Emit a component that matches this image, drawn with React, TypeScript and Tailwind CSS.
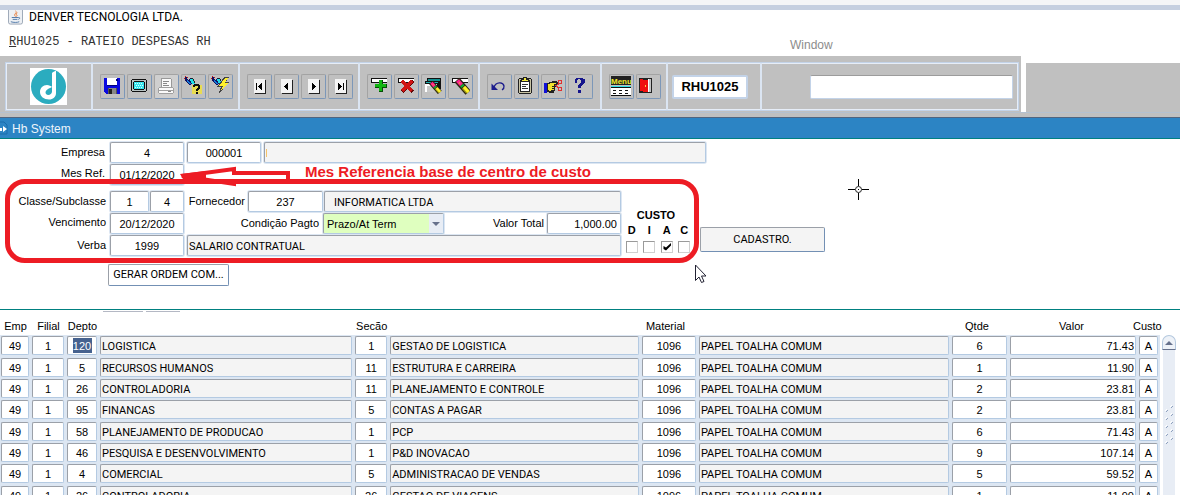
import React from "react";

type Kids = { children?: React.ReactNode };

const field =
  "h-[21px] min-w-0 rounded-[2px] border border-t-[#9ba0a8] border-l-[#9ba0a8] border-r-[#b4cae2] border-b-[#b4cae2] px-[3px] pt-px text-[11px] leading-4 text-black outline-none shadow-[0_0_0_1px_#dce6f2]";

const caps = "font-['Roboto',sans-serif]";

function Icon({ children }: Kids) {
  return (
    <svg viewBox="0 0 20 20" className="h-5 w-5" shapeRendering="crispEdges" aria-hidden="true">
      {children}
    </svg>
  );
}

function Nav({ d }: { d: string }) {
  return (
    <Icon>
      <path d="M6 4h11v14H6z" fill="#222" />
      <path d="M5 3h11v14H5z" fill="#f4f4f4" />
      <path d={d} fill="#000" transform="translate(1 1)" />
    </Icon>
  );
}

function Pencil() {
  return (
    <g shapeRendering="auto">
      <path d="M5 3l11 12.500" stroke="#2a2410" strokeWidth="6.500" />
      <path d="M5.500 3.500l4 4.500" stroke="#ff2090" strokeWidth="4" />
      <path d="M7 5.500l1 1" stroke="#ff9a30" strokeWidth="1.500" />
      <path d="M9.500 8l1.500 1.700" stroke="#18a830" strokeWidth="4" />
      <path d="M11.500 10.200l4.500 5" stroke="#a09a18" strokeWidth="4.500" />
      <path d="M12 10l4.500 5" stroke="#fff32a" strokeWidth="3" />
    </g>
  );
}

function Flashlight() {
  return (
    <>
      <path d="M2 1h2v2h1v1h1V3h1V2h1v1h1v5h-1v1H6V8H5V7H4V6H3V5H2z" fill="#101060" />
      <path d="M1 2h1v1H1zM2 0h1v1H2zM4 1h1v1H4z" fill="#d01010" />
      <path d="M4 4h1v1h1v1h1v1h1v1H6V7H5V6H4z" fill="#1478d8" />
      <path d="M7 3h3v2h1v2h1v1H9V7H8V5H7z" fill="#20e0e8" />
      <path d="M8 2h2v1h1v2h1v2h-1V5h-1V3H8z" fill="#222" />
    </>
  );
}

const groups: { label: string; icon: React.ReactNode; off?: boolean }[][] = [
  [
    {
      label: "Salvar",
      icon: (
        <Icon>
          <path d="M2 2h16v16H4v-1H3v-1H2z" fill="#0a0ae0" />
          <path d="M5 2h10v7H5z" fill="#fff" />
          <path d="M14 3h2v2h-2zM5 9h10v1H5z" fill="#000080" />
          <path d="M6 12h9v6H6z" fill="#555" />
          <path d="M7 12h7v6H7z" fill="#888" />
          <path d="M7 13h3v5H7z" fill="#222" />
        </Icon>
      ),
    },
    {
      label: "Tela",
      icon: (
        <Icon>
          <path d="M3 3h14v1h1v11h-1v1H3v-1H2V4h1z" fill="#111" />
          <path d="M3 4h14v11H3z" fill="#b9c3c3" />
          <path d="M5 5h10v1h1v7h-1v1H5v-1H4V6h1z" fill="#111" />
          <path d="M5 6h10v7H5z" fill="#38e6ee" />
          <path d="M6 7h1v1H6zM8 7h1v1H8zM10 7h1v1h-1zM12 7h1v1h-1zM7 9h1v1H7zM9 9h1v1H9zM11 9h1v1h-1zM13 9h1v1h-1zM6 11h1v1H6zM8 11h1v1H8zM10 11h1v1h-1zM12 11h1v1h-1z" fill="#d0ffff" />
        </Icon>
      ),
    },
    {
      label: "Imprimir",
      off: true,
      icon: (
        <Icon>
          <path d="M5 2h10v10H5z" fill="#fafafa" />
          <path d="M5 2h10v1H5zM5 3h1v8H5zM15 3h1v8h-1z" fill="#999" />
          <path d="M7 5h6v1H7zM7 7h4v1H7zM7 9h6v1H7z" fill="#888" />
          <path d="M3 11h14v1h1v5h-1v1H3v-1H2v-5h1z" fill="#a0a0a0" />
          <path d="M3 12h14v2H3zM3 15h14v2H3z" fill="#fafafa" />
          <path d="M12 15h3v1h-3z" fill="#888" />
        </Icon>
      ),
    },
    {
      label: "Consultar",
      icon: (
        <Icon>
          <Flashlight />
          <path d="M9 9h10v9H9z" fill="#e8dc50" />
          <path d="M11 8h5v1h1v4h-1v1h-1v1h-2v-2h1v-1h1v-2h-3v1h-2V9h1zM13 16h2v2h-2z" fill="#111" />
        </Icon>
      ),
    },
    {
      label: "Executar consulta",
      icon: (
        <Icon>
          <Flashlight />
          <path d="M14 1h5l-3 5h3L8 19l3-8H7z" fill="#444" />
          <path d="M15 2h3l-3 5h3l-8 9 3-6H9z" fill="#fff02a" />
        </Icon>
      ),
    },
  ],
  [
    { label: "Primeiro", icon: <Nav d="M6 6h1v7H6zM12 6v7h-1v-1h-1v-1H9v-1H8V9h1V8h1V7h1V6z" /> },
    { label: "Anterior", icon: <Nav d="M11 6v7h-1v-1H9v-1H8v-1H7V9h1V8h1V7h1V6z" /> },
    { label: "Próximo", icon: <Nav d="M8 6v7h1v-1h1v-1h1v-1h1V9h-1V8h-1V7H9V6z" /> },
    { label: "Último", icon: <Nav d="M13 6h-1v7h1zM7 6v7h1v-1h1v-1h1v-1h1V9h-1V8H9V7H8V6z" /> },
  ],
  [
    {
      label: "Inserir",
      icon: (
        <Icon>
          <path d="M2 2h16v5H2z" fill="#111" />
          <path d="M3 3h15v3H3z" fill="#fff" />
          <path d="M10 4h4v4h4v4h-4v4h-4v-4H6V8h4z" fill="#064d06" />
          <path d="M10 4h3v4h4v3h-4v4h-3v-4H6V8h4z" fill="#12b612" />
        </Icon>
      ),
    },
    {
      label: "Excluir",
      icon: (
        <Icon>
          <path d="M2 2h16v5H2z" fill="#111" />
          <path d="M3 3h15v3H3z" fill="#fff" />
          <path d="M6 5l11 11M17 5L6 16" stroke="#600808" strokeWidth="4" />
          <path d="M6 5l10 10M16 5L6 15" stroke="#d01414" strokeWidth="3" />
        </Icon>
      ),
    },
    {
      label: "Limpar tela",
      icon: (
        <Icon>
          <path d="M4 2h14v11H4z" fill="#111" />
          <path d="M5 3h12v2H5z" fill="#109090" />
          <path d="M2 5h14v11H2z" fill="#111" />
          <path d="M3 6h12v1H3z" fill="#20b0b0" />
          <path d="M2 8h12v8H2z" fill="#fff" />
          <path d="M4 10h9v6H4z" fill="#c8c8c8" />
          <g transform="translate(4 4) scale(.8)"><Pencil /></g>
        </Icon>
      ),
    },
    {
      label: "Limpar registro",
      icon: (
        <Icon>
          <path d="M2 2h16v5H2z" fill="#111" />
          <path d="M3 3h15v3H3z" fill="#fff" />
          <g transform="translate(2 1)"><Pencil /></g>
        </Icon>
      ),
    },
  ],
  [
    {
      label: "Desfazer",
      icon: (
        <svg viewBox="0 0 20 20" className="h-5 w-5" aria-hidden="true">
          <path d="M5 11c2-5 9-5.500 10-1 .3 2-.5 3-2 4" fill="none" stroke="#1c1c8c" strokeWidth="1.300" />
          <path d="M2.500 7.500v6.500H9z" fill="#1c1c8c" />
        </svg>
      ),
    },
    {
      label: "Colar",
      icon: (
        <Icon>
          <path d="M3 2h12v1h1v14h-1v1H3v-1H2V3h1z" fill="#222" />
          <path d="M3 3h12v14H3z" fill="#c9c4a4" />
          <path d="M4 4h10v12H4z" fill="#222" />
          <path d="M5 5h8v10H5z" fill="#fff" />
          <path d="M7 1h4v2h2v3H5V3h2z" fill="#222" />
          <path d="M8 2h2v2h2v1H6V4h2z" fill="#f4ea3c" />
          <path d="M6 8h6v1H6zM6 10h4v1H6zM6 12h6v1H6z" fill="#333" />
        </Icon>
      ),
    },
    {
      label: "Recortar",
      icon: (
        <Icon>
          <path d="M1 7h3v10H1z" fill="#1010d8" />
          <path d="M4 7h2V6h3V5h5v1h1v3h-3v6h-1v2H6v-1H4z" fill="#222" />
          <path d="M5 8h2V7h6v1h-2v6h-1v1H6v-1H5z" fill="#f0e030" />
          <path d="M9 10h4M9 12h3M8 14h3" stroke="#222" />
          <path d="M12 10l4-2M12 9l4 3" stroke="#e03030" />
          <path d="M15.500 4.500h3v3h-3zM15.500 11.500h3v3h-3z" fill="none" stroke="#e03030" />
        </Icon>
      ),
    },
    {
      label: "Ajuda",
      icon: (
        <Icon>
          <path d="M6 2h7v1h2v4h-1v1h-1v1h-1v1h-1v2H8v-3h1V8h1V7h1V4h-1V3H8v1H7v3H5V3h1zM8 14h3v3H8z" fill="#15158c" />
        </Icon>
      ),
    },
  ],
  [
    {
      label: "Menu",
      icon: (
        <Icon>
          <path d="M0 0h20v9H0z" fill="#222" />
          <text x="0" y="8" fontSize="8" fontWeight="700" fontFamily="Liberation Sans, sans-serif" fill="#f0ea2c">Menu</text>
          <path d="M0 10h20v1H0z" fill="#30e0e8" />
          <path d="M0 11h20v1H0z" fill="#111" />
          <path d="M0 12h20v8H0z" fill="#fff" />
          <path d="M2 14.500h4M8 14.500h4M14 14.500h4M2 17.500h4M8 17.500h4M14 17.500h4" stroke="#111" strokeDasharray="3 1" />
          <path d="M0 19h20v1H0z" fill="#111" />
        </Icon>
      ),
    },
    {
      label: "Sair",
      icon: (
        <Icon>
          <path d="M1 2h13v15H1z" fill="#222" />
          <path d="M2 3h3v1h5v12H5v-1H2z" fill="#f01010" />
          <path d="M7 9h1v2H7z" fill="#ffd040" />
          <path d="M10 3h1v13h-1z" fill="#fff" />
          <path d="M11 3h2v13h-2z" fill="#c4c4c4" />
        </Icon>
      ),
    },
  ],
];

const rows = [
  ["120", "LOGISTICA", "1", "GESTAO DE LOGISTICA", "6", "71.43"],
  ["5", "RECURSOS HUMANOS", "11", "ESTRUTURA E CARREIRA", "1", "11.90"],
  ["26", "CONTROLADORIA", "11", "PLANEJAMENTO E CONTROLE", "2", "23.81"],
  ["95", "FINANCAS", "5", "CONTAS A PAGAR", "2", "23.81"],
  ["58", "PLANEJAMENTO DE PRODUCAO", "1", "PCP", "6", "71.43"],
  ["46", "PESQUISA E DESENVOLVIMENTO", "1", "P&D INOVACAO", "9", "107.14"],
  ["4", "COMERCIAL", "5", "ADMINISTRACAO DE VENDAS", "5", "59.52"],
  ["26", "CONTROLADORIA", "26", "GESTAO DE VIAGENS", "1", "11.90"],
];

const columns = [
  { name: "Emp", text: false, align: "text-center", head: "text-center" },
  { name: "Filial", text: false, align: "text-center", head: "text-center" },
  { name: "Depto", text: false, align: "text-center", head: "text-center" },
  { name: "", text: true, align: "text-left", head: "" },
  { name: "Secão", text: false, align: "text-center", head: "text-center" },
  { name: "", text: true, align: "text-left", head: "" },
  { name: "Material", text: false, align: "text-center", head: "text-left pl-[5px]" },
  { name: "", text: true, align: "text-left", head: "" },
  { name: "Qtde", text: false, align: "text-center", head: "text-center pr-[6px]" },
  { name: "Valor", text: false, align: "text-right", head: "text-center pr-[4px]" },
  { name: "Custo", text: false, align: "text-center", head: "" },
];

function Toolbar() {
  return (
    <div className="flex">
      <div className="min-w-0 flex-1 bg-[#c0c0c0] pt-[6px] pr-[2px] pb-px pl-[5px]">
        <div className="flex h-[49px] border border-[#c3d3e8] shadow-[inset_0_0_0_1px_#e6edf7]">
          <div className="flex w-[87px] shrink-0 items-center justify-center border-r-2 border-[#dbe5f2]">
            <svg viewBox="0 0 37 37" className="h-[37px] w-[37px]" role="img" aria-label="Denver">
              <rect width="37" height="37" fill="#fff" />
              <circle cx="18.500" cy="18.500" r="17.500" fill="#2bacbf" />
              <path d="M22 5c1.500-1.500 3-2 4-2v22c0 4-3 6.500-7 6.500-5 0-9-3-9-7.500 0-4 3-7 7-7 2 0 4 1 5 2z" fill="#fff" />
              <path d="M22 19c-1 1-3 1-4 2-2.500 1.500-3 3.500-2 5 2 2 6 .5 6-2.500z" fill="#2bacbf" />
            </svg>
          </div>
          {groups.map((g, i) => (
            <div
              key={i}
              className="flex shrink-0 items-center gap-[2px] border-r-2 border-[#dbe5f2] pr-[5px] pl-[7px] nth-[5]:pr-[7px]"
            >
              {g.map((b) => (
                <button
                  key={b.label}
                  type="button"
                  aria-label={b.label}
                  disabled={b.off}
                  className="flex h-[25px] w-[25px] items-start justify-start rounded-[2px] border border-t-[#a3a3a3] border-l-[#a3a3a3] border-r-[#7c97b8] border-b-[#7c97b8] pt-px pl-px disabled:bg-[#cfcfcf]"
                >
                  {b.icon}
                </button>
              ))}
            </div>
          ))}
          <div className="flex w-[94px] shrink-0 items-center border-r-2 border-[#dbe5f2] px-[4px]">
            <input
              aria-label="Programa"
              readOnly
              value="RHU1025"
              className="h-[24px] w-[76px] rounded-[2px] border-2 border-[#c3d3e8] bg-white text-center text-[13px] font-bold text-black outline-none"
            />
          </div>
          <div className="flex min-w-0 flex-1 items-center pr-[5px] pl-[48px]">
            <input
              aria-label="Mensagem"
              className="h-[24px] w-full rounded-[2px] border border-[#c3d3e8] border-t-[#9c9c9c] bg-white px-1 text-xs outline-none"
            />
          </div>
        </div>
      </div>
      <div className="w-[5px] bg-white" />
      <div className="w-[154px] bg-white pt-[7px]">
        <div className="h-full bg-[#c0c0c0]" />
      </div>
    </div>
  );
}

function Form() {
  return (
    <section className="relative flex flex-col border-b border-[#008080] pt-[3px] pb-[23px]">
      <div className="flex flex-col gap-px">
        <div className="flex gap-[3px]">
          <label htmlFor="empresa" className="w-[107px] pt-[2px] pr-[2px] text-right">Empresa</label>
          <input id="empresa" defaultValue="4" className={`${field} w-[74px] text-center`} />
          <input aria-label="Código da empresa" defaultValue="000001" className={`${field} w-[74px] text-center`} />
          <input aria-label="Nome da empresa" readOnly className={`${field} w-[442px] bg-[#f4f4f4]`} />
        </div>
        <div className="flex gap-[3px]">
          <label htmlFor="mes" className="w-[107px] pt-px pr-[2px] text-right">Mes Ref.</label>
          <input id="mes" defaultValue="01/12/2020" className={`${field} w-[74px] pt-0 text-center`} />
        </div>
      </div>
      <div className="mt-[6px] flex">
        <div className="flex w-[621px] flex-col gap-px">
          <div className="flex gap-px">
            <label htmlFor="classe" className="w-[109px] pt-[2px] pr-[3px] text-right">Classe/Subclasse</label>
            <input id="classe" defaultValue="1" className={`${field} w-[39px] text-center`} />
            <input aria-label="Subclasse" defaultValue="4" className={`${field} w-[34px] text-center`} />
            <label htmlFor="forn" className="w-[60px] pt-[2px] text-right">Fornecedor</label>
            <input id="forn" defaultValue="237" className={`${field} ml-[2px] w-[75px] text-center`} />
            <input aria-label="Nome do fornecedor" readOnly value="INFORMATICA LTDA" className={`${field} ${caps} flex-1 bg-[#f4f4f4] pl-[9px]`} />
          </div>
          <div className="flex">
            <label htmlFor="venc" className="w-[110px] pt-[1px] pr-[4px] text-right">Vencimento</label>
            <input id="venc" defaultValue="20/12/2020" className={`${field} w-[74px] text-center`} />
            <label htmlFor="cond" className="w-[139px] pt-[2px] pr-[4px] text-right">Condição Pagto</label>
            <div className="relative w-[121px]">
              <select id="cond" className={`${field} w-full appearance-none border-[#9ba0a8] bg-[#dfffbf]`}>
                <option>Prazo/At Term</option>
              </select>
              <span className="pointer-events-none absolute inset-y-px right-px flex w-[14px] items-center justify-center bg-[#e8edf5]">
                <svg viewBox="0 0 8 4" className="h-1 w-2"><path d="M0 0h8L4 4z" fill="#66718c" /></svg>
              </span>
            </div>
            <label htmlFor="total" className="w-[103px] pt-[2px] pr-[3px] text-right">Valor Total</label>
            <input id="total" defaultValue="1,000.00" className={`${field} flex-1 text-right`} />
          </div>
          <div className="flex">
            <label htmlFor="verba" className="w-[110px] pt-[2px] pr-[4px] text-right">Verba</label>
            <input id="verba" defaultValue="1999" className={`${field} w-[74px] text-center`} />
            <input aria-label="Descrição da verba" readOnly value="SALARIO CONTRATUAL" className={`${field} ${caps} ml-[3px] flex-1 bg-[#f4f4f4] pl-px`} />
          </div>
        </div>
        <fieldset className="ml-[2px] w-[70px] pt-[17px] text-center leading-[15px] font-bold">
          <div className="pr-[4px]">CUSTO</div>
          <div className="grid grid-cols-4">
            {["D", "I", "A", "C"].map((c) => (
              <label key={c} className="flex flex-col items-center gap-[3px]">
                {c}
                <span className="grid">
                  <input type="checkbox" defaultChecked={c === "A"} className="peer col-start-1 row-start-1 h-[12px] w-[12px] appearance-none border border-[#9a9a9a] border-r-[#d0d0d0] border-b-[#d0d0d0]" />
                  <svg viewBox="0 0 12 12" className="pointer-events-none invisible col-start-1 row-start-1 h-3 w-3 peer-checked:visible">
                    <path d="M2.500 5v3L5 9.500l5-5V2L5 6.500z" fill="#000" />
                  </svg>
                </span>
              </label>
            ))}
          </div>
        </fieldset>
        <button type="button" className={`${caps} mt-[36px] ml-[7px] h-[25px] w-[125px] rounded-[2px] border border-[#9ba0a8] border-r-[#7390b4] border-b-[#7390b4] bg-[#f4f4f4]`}>
          CADASTRO.
        </button>
      </div>
      <button type="button" className={`${caps} mt-[8px] ml-[108px] h-[22px] w-[121px] rounded-[2px] border border-[#9ba0a8] border-r-[#7390b4] border-b-[#7390b4] bg-white`}>
        GERAR ORDEM COM...
      </button>

      <svg viewBox="0 0 114 22" className="pointer-events-none absolute top-[26px] left-[179px] h-[22px] w-[114px]" aria-hidden="true">
        <path d="M3 11L55 4v4h54v8H55v3z" fill="#fff" stroke="#ed1c24" strokeWidth="4" />
        <path d="M1 9l26-3v8H4z" fill="#ed1c24" />
      </svg>
      <div className="pointer-events-none absolute top-[40px] left-[5px] h-[84px] w-[694px] rounded-[20px] border-[5px] border-[#ed1c24]" />
      <p className="pointer-events-none absolute top-[23px] left-[305px] text-[15px] leading-5 font-bold whitespace-nowrap text-[#ed1c24]">
        Mes Referencia base de centro de custo
      </p>
      <svg viewBox="0 0 21 21" className="pointer-events-none absolute top-[40px] left-[848px] h-[21px] w-[21px]" aria-hidden="true">
        <path d="M10.500 0v7M10.500 14v7M0 10.500h7M14 10.500h7" stroke="#000" />
        <circle cx="10.500" cy="10.500" r="3" fill="none" stroke="#222" />
        <path d="M10 10h1v1h-1z" fill="#000" />
      </svg>
      <svg viewBox="0 0 12 19" className="pointer-events-none absolute top-[125px] left-[695px] h-[19px] w-3" aria-hidden="true">
        <path d="M.5 1v15.500L4 13l2.500 5.500L9 17.500 6.500 12H11z" fill="#fff" stroke="#223" />
      </svg>
      <span className="pointer-events-none absolute top-[10px] left-[266px] h-[8px] w-px bg-[#f5c36a]" />
    </section>
  );
}

function Grid() {
  return (
    <div className="flex min-h-0 flex-1 overflow-hidden pt-[4px]">
      <table className="w-full min-w-0 flex-1 table-fixed border-collapse self-start">
        <colgroup>
          <col className="w-[31px]" /><col className="w-[35px]" /><col className="w-[33px]" /><col className="w-[22%]" />
          <col className="w-[35px]" /><col className="w-[21.7%]" /><col className="w-[57px]" /><col />
          <col className="w-[58px]" /><col className="w-[129px]" /><col className="w-[22px]" />
        </colgroup>
        <thead>
          <tr className="h-[18px] whitespace-nowrap">
            {columns.map((c, i) => (
              <th key={i} scope="col" className={`p-0 pt-px font-normal leading-[17px] ${c.head}`}>
                <span className={i === 10 ? "-ml-[5px]" : ""}>{c.name}</span>
              </th>
            ))}
          </tr>
        </thead>
        <tbody>
          {rows.map((r, n) => {
            const cells = ["49", "1", r[0], r[1], r[2], r[3], "1096", "PAPEL TOALHA COMUM", r[4], r[5], "A"];
            return (
              <tr key={n} className="h-[21px] bg-[#dce6f2] nth-[3n+1]:h-[22px]">
                {cells.map((v, i) => (
                  <td key={i} className="p-0 align-top">
                    <div className="pt-px pr-[2px] pl-px">
                      <div className={`flex h-[19px] w-full items-center justify-center rounded-[2px] border border-t-[#9ba0a8] border-l-[#9ba0a8] border-r-[#b4cae2] border-b-[#b4cae2] ${columns[i].text ? "bg-[#f4f4f4]" : "bg-white"}`}>
                        <input
                          aria-label={`${columns[i].name || "Descrição"} ${n + 1}`}
                          defaultValue={v}
                          className={`min-w-0 outline-none ${columns[i].align} ${columns[i].text ? "h-[17px] pt-[2px] font-['Roboto',sans-serif]" : "h-[15px] pt-px"} ${n === 0 && i === 2 ? "w-[19px] bg-[#46628f] text-white" : "w-full px-px"}`}
                        />
                      </div>
                    </div>
                  </td>
                ))}
              </tr>
            );
          })}
        </tbody>
      </table>
      <div className="mt-[18px] flex w-5 shrink-0 flex-col items-center pr-[2px]">
        <button type="button" aria-label="Rolar para cima" className="flex h-[15px] w-[14px] shrink-0 items-center justify-center rounded-t-[7px] border border-[#b4c8de] border-b-[#66718c] bg-[#eef2f8]">
          <svg viewBox="0 0 8 4" className="h-1 w-2"><path d="M0 4h8L4 0z" fill="#66718c" /></svg>
        </button>
        <div className="flex w-3 flex-1 flex-col items-center bg-[#e8edf5] pt-[54px]">
          <svg viewBox="0 0 10 44" className="h-[44px] w-[10px]" aria-hidden="true">
            {[0, 8, 16, 24, 32].map((y) => (
              <g key={y}>
                <path d={`M6 ${y + 3}l2-2M1 ${y + 7}l2-2`} stroke="#fff" />
                <path d={`M7 ${y + 4}l2-2M2 ${y + 8}l2-2`} stroke="#8ea0bd" />
              </g>
            ))}
          </svg>
        </div>
      </div>
    </div>
  );
}

export default function App() {
  return (
    <div className="flex h-screen flex-col overflow-hidden bg-white font-['Liberation_Sans',sans-serif] text-[11px] leading-4 text-black">
      <div className="h-[5px] shrink-0 bg-[#f4f5f7]" />
      <div className="h-[5px] shrink-0 bg-[#c5cfe0]" />
      <header className="flex h-[46px] shrink-0 flex-col">
        <div className="flex h-[14px] items-center gap-[6px] pl-2">
          <svg viewBox="0 0 16 16" className="h-[15px] w-[15px]" aria-hidden="true">
            <path d="M.5 0v13a2 2 0 0 0 2 2h11a2 2 0 0 0 2-2V0" fill="#edf0f4" stroke="#98a3b3" />
            <path d="M8 1c3 2-3 3 0 6M10 3c-3 2 1 2-1 4" stroke="#e8742c" fill="none" />
            <path d="M4 8h7M5 10h5M3 12.500c3 1 7 1 9 0M11 8c2-.5 2 1.500 0 2" stroke="#4d76a6" fill="none" />
          </svg>
          <h1 className="font-['Roboto',sans-serif] text-xs leading-[14px]">DENVER TECNOLOGIA LTDA.</h1>
        </div>
        <div className="flex items-start">
          <p className="w-[781px] pt-[10px] pl-[9px] font-['Liberation_Mono',monospace] text-xs leading-4 text-[#333]">
            <u>R</u>HU1025 - RATEIO DESPESAS RH
          </p>
          <span className="pt-[13px] pl-[9px] text-xs leading-4 text-[#8c8c8c]">Window</span>
        </div>
      </header>
      <Toolbar />
      <div className="h-[5px] shrink-0 border-t border-[#b4c1d0] bg-[#c0c0c0]" />
      <div className="flex h-[22px] shrink-0 items-center gap-[4px] border-t border-b border-t-[#52657f] border-b-[#008080] bg-[#2c84c4]">
        <svg viewBox="0 0 8 14" className="h-[14px] w-2" aria-hidden="true">
          <path d="M0 1h4l3 3v9H0" fill="none" stroke="#1a6cab" />
          <path d="M3 5l4 3-4 3zM0 7h2v3H0z" fill="#fff" />
        </svg>
        <h2 className="pt-px text-xs text-[#eef5fb]">Hb System</h2>
      </div>
      <Form />
      <div className="flex h-[3px] shrink-0 items-start gap-[3px] pt-px pl-[103px]">
        <span className="h-px w-[40px] bg-[#b4b8c4]" />
        <span className="h-px w-[34px] bg-[#b4b8c4]" />
      </div>
      <Grid />
    </div>
  );
}
